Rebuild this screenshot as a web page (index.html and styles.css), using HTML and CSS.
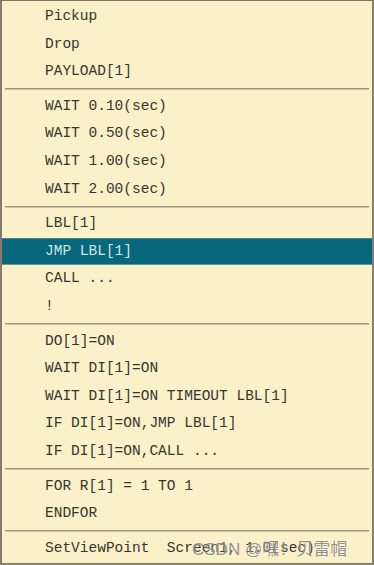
FILE: index.html
```html
<!DOCTYPE html>
<html>
<head>
	<meta charset="utf-8">
	<title>Menu</title>
	<link rel="stylesheet" href="styles.css">
</head>
<body>

	<div class="menu">
		<div class="item">Pickup</div>
		<div class="item">Drop</div>
		<div class="item">PAYLOAD[1]</div>
		<div class="sep"></div>
		<div class="item">WAIT 0.10(sec)</div>
		<div class="item">WAIT 0.50(sec)</div>
		<div class="item">WAIT 1.00(sec)</div>
		<div class="item">WAIT 2.00(sec)</div>
		<div class="sep"></div>
		<div class="item">LBL[1]</div>
		<div class="item activo">JMP LBL[1]</div>
		<div class="item">CALL ...</div>
		<div class="item">!</div>
		<div class="sep"></div>
		<div class="item">DO[1]=ON</div>
		<div class="item">WAIT DI[1]=ON</div>
		<div class="item">WAIT DI[1]=ON TIMEOUT LBL[1]</div>
		<div class="item">IF DI[1]=ON,JMP LBL[1]</div>
		<div class="item">IF DI[1]=ON,CALL ...</div>
		<div class="sep"></div>
		<div class="item">FOR R[1] = 1 TO 1</div>
		<div class="item">ENDFOR</div>
		<div class="sep"></div>
		<div class="item">SetViewPoint  Screen1, 1.0(sec)</div>

		<div class="marca">CSDN @嘿！贝雷帽</div>
	</div>

</body>
</html>
```

FILE: styles.css
```css
*{box-sizing: border-box;}
html, body{margin: 0; padding: 0;}
body{background: #ffffff;}

div.menu{
	position: relative;
	width: 374px;
	height: 565px;
	padding-top: 2px;
	background: #faf1c9;
	border-top: 1px solid #7c7265;
	border-left: 2px solid #857a6c;
	border-right: 2px solid #8a8072;
	border-bottom: 2px solid #8a8072;
	font-family: "Liberation Mono", "DejaVu Sans Mono", monospace;
	font-size: 14.5px;
	color: #383530;
}

div.item{
	height: 27.6px;
	line-height: 27.6px;
	padding-left: 43px;
	white-space: pre;
}
div.item.activo{
	background: #08677a;
	color: #cfe6e6;
	border-top: 1px solid #3c8a96;
	border-bottom: 1px solid #5d9aa0;
	line-height: 25.6px;
}

div.sep{
	height: 2px;
	margin: 2.5px 3px 2.5px 3px;
	border-top: 1px solid #9c9282;
	border-bottom: 1px solid #cfc6a6;
}

div.marca{
	position: absolute;
	left: 190px;
	top: 534px;
	font-family: "Liberation Sans", "Noto Sans CJK SC", sans-serif;
	font-size: 17px;
	color: rgba(110, 110, 110, 0.75);
	text-shadow: 0 0 2px rgba(255,255,255,0.8);
	white-space: nowrap;
}
```
